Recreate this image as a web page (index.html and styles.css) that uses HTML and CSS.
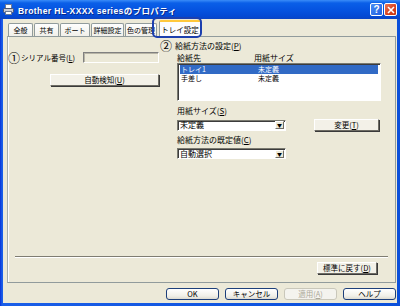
FILE: index.html
```html
<!DOCTYPE html>
<html lang="ja">
<head>
<meta charset="utf-8">
<link rel="stylesheet" href="styles.css">
</head>
<body>
<div class="win">
  <div class="titlebar">
    <svg class="appicon" width="11" height="11" viewBox="0 0 11 11">
      <rect x="2.5" y="0.5" width="6" height="4" fill="#fff" stroke="#6b7a99"/>
      <rect x="0.5" y="4.5" width="10" height="4" rx="1" fill="#c9ccd6" stroke="#4d5670"/>
      <rect x="2.5" y="7.5" width="6" height="3" fill="#fff" stroke="#6b7a99"/>
    </svg>
    <span class="title">Brother HL-XXXX seriesのプロパティ</span>
    <span class="tbtn help">?</span>
    <span class="tbtn close">
      <svg width="8" height="8" viewBox="0 0 8 8"><path d="M1 1L7 7M7 1L1 7" stroke="#fff" stroke-width="1.6"/></svg>
    </span>
  </div>
  <div class="client">
    <div class="tabs">
      <span class="tab w25">全般</span>
      <span class="tab w25">共有</span>
      <span class="tab w30">ポート</span>
      <span class="tab w33">詳細設定</span>
      <span class="tab w32">色の管理</span>
      <span class="tab active">トレイ設定</span>
      <span class="focusmark"></span>
    </div>
    <div class="panel">
      <div class="cols">
        <div class="left">
          <div class="serial">
            <span class="num">①</span><span class="lbl">シリアル番号(<u>L</u>)</span>
            <span class="field"></span>
          </div>
          <div class="btnrow"><span class="btn auto">自動検知(<u>U</u>)</span></div>
        </div>
        <div class="right">
          <div class="head"><span class="num">②</span><span class="lbl">給紙方法の設定(<u>P</u>)</span></div>
          <div class="colhead"><span class="c1">給紙先</span><span>用紙サイズ</span></div>
          <div class="list">
            <div class="item sel"><span class="c1">トレイ1</span><span>未定義</span></div>
            <div class="item"><span class="c1">手差し</span><span>未定義</span></div>
          </div>
          <div class="flabel first">用紙サイズ(<u>S</u>)</div>
          <div class="comborow">
            <span class="combo"><span class="ctext">未定義</span><span class="arrow">▼</span></span>
            <span class="btn change">変更(<u>T</u>)</span>
          </div>
          <div class="flabel">給紙方法の既定値(<u>C</u>)</div>
          <div class="comborow">
            <span class="combo"><span class="ctext">自動選択</span><span class="arrow">▼</span></span>
          </div>
        </div>
      </div>
      <div class="sep"></div>
      <div class="resetrow"><span class="btn reset">標準に戻す(<u>D</u>)</span></div>
    </div>
    <div class="footer">
      <span class="xbtn">OK</span>
      <span class="xbtn">キャンセル</span>
      <span class="xbtn disabled">適用(<u>A</u>)</span>
      <span class="xbtn">ヘルプ</span>
    </div>
  </div>
</div>
</body>
</html>
```

FILE: styles.css
```css
* { box-sizing: border-box; }
html, body { margin: 0; padding: 0; }
body {
  width: 400px;
  height: 306px;
  overflow: hidden;
  font-family: "Noto Sans CJK JP", "Liberation Sans", sans-serif;
  font-size: 8px;
  color: #000;
  background: #0a4fda;
}
u { text-decoration: underline; text-underline-offset: 1px; }

.win {
  width: 400px;
  height: 306px;
  display: flex;
  flex-direction: column;
  background: linear-gradient(90deg, #0831d9, #1a5ee8 2px, #0a4fda);
}

.titlebar {
  height: 19px;
  flex: none;
  display: flex;
  align-items: center;
  padding: 0 3px 0 3px;
  background: linear-gradient(#3a8cf8 0, #0a5fe8 3px, #0553e0 10px, #0349d4 16px, #0a44c4 19px);
}
.appicon { flex: none; margin-right: 4px; }
.title {
  font-family: "Liberation Sans", "Noto Sans CJK JP", sans-serif;
  font-weight: bold;
  font-size: 8.5px;
  letter-spacing: 0.4px;
  color: #fff;
  text-shadow: 1px 1px 0 #0a2a8a;
  white-space: nowrap;
}
.tbtn {
  flex: none;
  width: 13px;
  height: 13px;
  border: 1px solid #fff;
  border-radius: 2px;
  display: flex;
  align-items: center;
  justify-content: center;
  color: #fff;
  font-family: "Liberation Sans", sans-serif;
  font-weight: bold;
  font-size: 10px;
  line-height: 1;
}
.help { margin-left: auto; margin-right: 1px; background: linear-gradient(135deg, #4a8cf5, #1f5fe0); }
.close { background: linear-gradient(135deg, #e8775a, #d8401c 60%, #c23614); }

.client {
  flex: 1;
  margin: 0 3px 3px 3px;
  background: #ece9d8;
  display: flex;
  flex-direction: column;
  padding: 0 1px 0 4px;
}

.tabs {
  height: 17px;
  flex: none;
  display: flex;
  align-items: flex-end;
  padding-left: 1px;
  position: relative;
}
.tab {
  height: 13px;
  padding: 0;
  margin-right: 1px;
  border: 1px solid #919b9c;
  border-bottom: none;
  border-radius: 2px 2px 0 0;
  background: linear-gradient(#fefefe, #f1f0ea);
  display: flex;
  align-items: center;
  justify-content: center;
  font-size: 7px;
  line-height: 1;
  white-space: nowrap;
}
.w25 { width: 25px; }
.w30 { width: 30px; }
.w32 { width: 32px; }
.w33 { width: 33px; }
.tab.active {
  width: 42px;
  height: 17px;
  margin-left: 1px;
  border-top: 2px solid #ffc83c;
  background: #fcfcfe;
  position: relative;
  z-index: 1;
  margin-bottom: -1px;
  font-size: 7.5px;
}
.focusmark {
  position: absolute;
  left: 145px;
  top: -2px;
  width: 50px;
  height: 21px;
  border: 2px solid #1c3fae;
  border-radius: 5px;
  z-index: 2;
}

.panel {
  flex: none;
  height: 247px;
  border: 1px solid #919b9c;
  border-left-color: #a6aeae;
  box-shadow: inset 1px 0 0 #fff;
  background: #ece9d8;
  display: flex;
  flex-direction: column;
}
.cols { display: flex; }
.left {
  width: 151px;
  flex: none;
  padding-top: 15px;
}
.num {
  font-size: 12px;
  line-height: 11px;
  margin-right: 1px;
}
.serial {
  display: flex;
  align-items: center;
  height: 11px;
}
.serial .lbl { font-size: 7.5px; }
.field {
  margin-left: auto;
  width: 76px;
  height: 11px;
  border: 1px solid;
  border-color: #808080 #fff #fff #808080;
  box-shadow: inset 1px 1px 0 #b7b4a6;
  background: #ece9d8;
}
.btnrow { display: flex; justify-content: flex-end; margin-top: 11px; }
.btn {
  height: 12px;
  display: flex;
  align-items: center;
  justify-content: center;
  font-size: 7.5px;
  line-height: 1;
  background: #f3f1e8;
  border: 1px solid;
  border-color: #fff #6e6c64 #6e6c64 #fff;
  box-shadow: 1px 1px 0 #3a3a3a;
  white-space: nowrap;
}
.auto { width: 109px; }

.right {
  flex: 1;
  padding-top: 2px;
  padding-left: 1px;
}
.head { display: flex; align-items: center; height: 12px; }
.head .lbl { font-size: 8px; margin-left: 2px; }
.colhead {
  display: flex;
  padding-left: 17px;
  margin-top: 1px;
  height: 10px;
  align-items: center;
}
.c1 { width: 77px; flex: none; }
.list {
  margin-left: 17px;
  width: 204px;
  height: 38px;
  margin-top: 1px;
  background: #fff;
  border: 1px solid;
  border-color: #7a7a70 #fff #fff #7a7a70;
  box-shadow: inset 1px 1px 0 #3c3c3c;
  padding: 1px 2px 0 2px;
}
.item {
  display: flex;
  align-items: center;
  height: 9px;
  line-height: 9px;
  font-size: 7px;
  padding-left: 1px;
  white-space: nowrap;
}
.item.sel { background: #316ac5; color: #fff; }
.flabel {
  padding-left: 17px;
  height: 10px;
  line-height: 10px;
  margin-top: 4px;
}
.flabel.first { margin-top: 5px; }
.comborow {
  display: flex;
  align-items: center;
  padding-left: 17px;
  margin-top: 3px;
}
.combo {
  width: 109px;
  height: 11px;
  background: #fff;
  border: 1px solid;
  border-color: #7a7a70 #fff #fff #7a7a70;
  box-shadow: inset 1px 1px 0 #3c3c3c;
  display: flex;
  align-items: center;
  padding-left: 2px;
}
.ctext { flex: 1; line-height: 1; }
.arrow {
  width: 9px;
  height: 8px;
  margin-right: 1px;
  background: #ece9d8;
  border: 1px solid;
  border-color: #fff #6e6c64 #6e6c64 #fff;
  font-size: 5px;
  line-height: 6px;
  text-align: center;
  color: #000;
}
.change { width: 65px; margin-left: 28px; }

.sep {
  margin: auto 7px 0 7px;
  height: 2px;
  border-top: 1px solid #7f7d72;
  border-bottom: 1px solid #fff;
}
.resetrow {
  display: flex;
  justify-content: flex-end;
  padding: 4px 18px 8px 0;
}
.reset { width: 60px; }

.footer {
  display: flex;
  justify-content: flex-end;
  gap: 6px;
  margin-top: 5px;
  padding-right: 0;
}
.xbtn {
  width: 53px;
  height: 12px;
  border: 1px solid #1d3f7a;
  border-radius: 3px;
  background: linear-gradient(#ffffff, #f0efe8 70%, #dcdad0);
  display: flex;
  align-items: center;
  justify-content: center;
  font-size: 7.5px;
  line-height: 1;
  white-space: nowrap;
}
.xbtn.disabled { border-color: #c9c7ba; color: #aca899; background: #f4f3ee; }
```
